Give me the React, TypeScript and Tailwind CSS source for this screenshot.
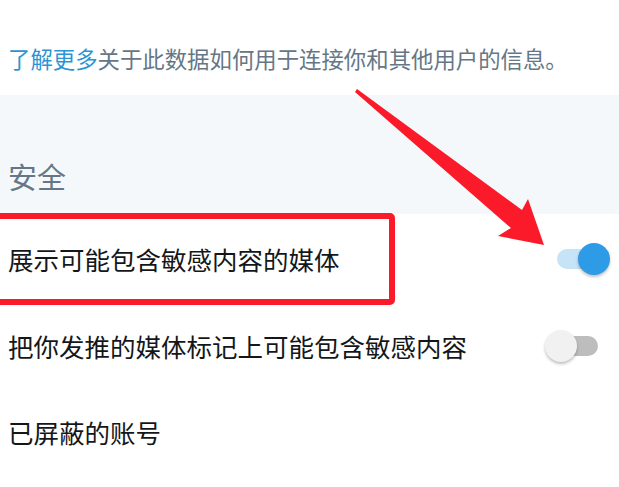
import React from 'react';

const font = { fontFamily: '"Noto Sans CJK SC", "Noto Sans", sans-serif' };

interface ToggleProps {
  on: boolean;
  className?: string;
}

const Toggle: React.FC<ToggleProps> = ({ on, className = '' }) => (
  <div className={`relative w-[53px] h-[32px] shrink-0 ${className}`}>
    <div
      className={`absolute top-[6px] h-[20px] w-[43px] rounded-full ${
        on ? 'left-0 bg-[#c6e3f7]' : 'left-[10px] bg-[#bdbdbd]'
      }`}
    />
    <div
      className={`absolute top-0 h-[32px] w-[32px] rounded-full shadow-[0_2px_3px_rgba(0,0,0,0.25)] ${
        on ? 'right-0 bg-[#2d9be6]' : 'left-0 bg-[#f1f1f1]'
      }`}
    />
  </div>
);

export default function App() {
  return (
    <div className="relative w-[619px] h-[487px] overflow-hidden bg-white" style={font}>
      <div className="h-[95px] pt-[44px] pl-[8px]">
        <p className="text-[22.4px] leading-[28px] text-[#657786] whitespace-nowrap">
          <span className="text-[#2b95d3]">了解更多</span>关于此数据如何用于连接你和其他用户的信息。
        </p>
      </div>

      <div className="h-[119px] bg-[#f5f8fa] pt-[63px] pl-[8px]">
        <h2 className="text-[29px] leading-[36px] font-normal text-[#657786]">安全</h2>
      </div>

      <div className="flex h-[90px] items-center justify-between pl-[8px] pr-[9px]">
        <span className="text-[25.5px] leading-[32px] text-[#14171a]">展示可能包含敏感内容的媒体</span>
        <Toggle on />
      </div>

      <div className="flex h-[84px] items-center justify-between pl-[8px] pr-[21px]">
        <span className="text-[25.5px] leading-[32px] text-[#14171a] whitespace-nowrap">
          把你发推的媒体标记上可能包含敏感内容
        </span>
        <Toggle on={false} />
      </div>

      <div className="flex h-[88px] items-center pl-[8px]">
        <span className="text-[25.5px] leading-[32px] text-[#14171a]">已屏蔽的账号</span>
      </div>

      {/* annotation: red box + arrow */}
      <div className="absolute left-[-10px] top-[213px] w-[405px] h-[92px] border-[6px] border-[#fa1a2a] rounded-[5px]" />
      <svg className="absolute left-0 top-0" width="619" height="487" viewBox="0 0 619 487">
        <polygon
          points="357,89 522,210 528,199 544,245 498,236 511,228 355,92"
          fill="#fa1a2a"
        />
      </svg>
    </div>
  );
}
